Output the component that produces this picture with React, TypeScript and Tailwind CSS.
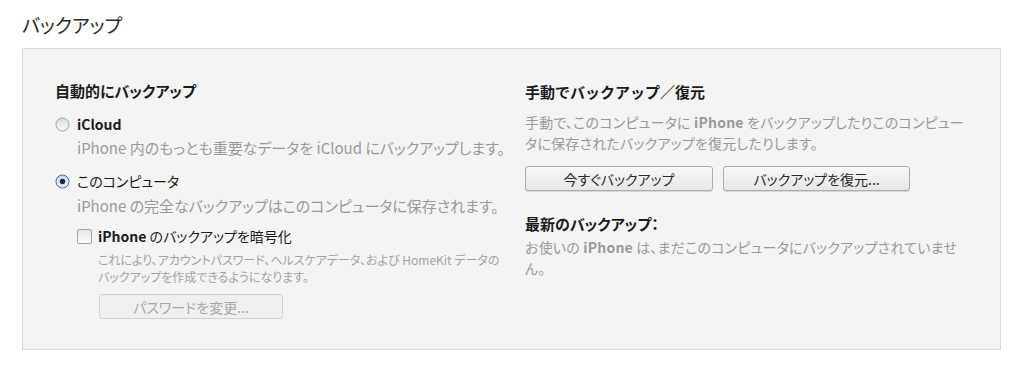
import React from "react";

const FONT = { fontFamily: '"Noto Sans CJK JP", "Noto Sans", sans-serif' };

function Radio({ checked }: { checked: boolean }) {
  return (
    <svg width="15" height="15" viewBox="0 0 15 15" className="shrink-0">
      <defs>
        <linearGradient id={checked ? "rOn" : "rOff"} x1="0" y1="0" x2="0" y2="1">
          <stop offset="0" stopColor={checked ? "#c4d7ee" : "#dcdcdc"} />
          <stop offset="1" stopColor={checked ? "#eef4fb" : "#fafafa"} />
        </linearGradient>
      </defs>
      <circle
        cx="7.5"
        cy="7.5"
        r="6.5"
        fill={`url(#${checked ? "rOn" : "rOff"})`}
        stroke={checked ? "#3f6ea6" : "#a6a6a6"}
        strokeWidth="1"
      />
      {checked && <circle cx="7.5" cy="7.5" r="2.7" fill="#1c2a3c" />}
    </svg>
  );
}

function Checkbox() {
  return (
    <div className="w-[15px] h-[15px] shrink-0 rounded-[2px] border border-[#a5a5a5] bg-gradient-to-b from-[#e6e6e6] to-[#fdfdfd]" />
  );
}

function WinButton({ children, disabled, className }: { children: React.ReactNode; disabled?: boolean; className?: string }) {
  return (
    <button
      disabled={disabled}
      className={
        "h-[25px] rounded-[3px] border text-[14px] leading-none flex items-center justify-center " +
        (disabled
          ? "border-[#d2d2d2] bg-[#f0f0f0] text-[#a8a8a8] "
          : "border-[#adadad] bg-gradient-to-b from-[#f8f8f8] to-[#e6e6e6] text-[#2a2a2a] shadow-[0_1px_0_#d6d6d6] ") +
        (className ?? "")
      }
    >
      {children}
    </button>
  );
}

export default function App() {
  return (
    <div className="w-[1024px] h-[369px] bg-white overflow-hidden [font-feature-settings:'palt']" style={FONT}>
      {/* Title */}
      <h1 className="pl-[22px] pt-[11px] mb-[9px] text-[19px] leading-[28px] text-[#2b2b2b]">
        バックアップ
      </h1>

      {/* Panel */}
      <div className="ml-[22px] w-[979px] h-[302px] border border-[#dadada] bg-[#f4f4f4] flex">
        {/* Automatic backup */}
        <div className="w-[502px] pl-[32px] pt-[32px] flex flex-col whitespace-nowrap">
          <div className="text-[15px] leading-[20px] font-bold text-[#1b1b1b]">自動的にバックアップ</div>

          <label className="mt-[13px] flex items-center gap-[7px] h-[20px] text-[14px] text-[#1b1b1b]">
            <Radio checked={false} />
            <span className="font-bold">iCloud</span>
          </label>
          <div className="mt-[4px] pl-[22px] text-[15px] leading-[20px] text-[#9a9a9a]">
            iPhone 内のもっとも重要なデータを iCloud にバックアップします。
          </div>

          <label className="mt-[13px] flex items-center gap-[7px] h-[20px] text-[14px] text-[#1b1b1b]">
            <Radio checked={true} />
            <span>このコンピュータ</span>
          </label>
          <div className="mt-[5px] pl-[22px] text-[15px] leading-[20px] text-[#9a9a9a]">
            iPhone の完全なバックアップはこのコンピュータに保存されます。
          </div>

          <label className="mt-[10px] ml-[22px] flex items-center gap-[6px] h-[20px] text-[14px] text-[#1b1b1b]">
            <Checkbox />
            <span>
              <span className="font-bold">iPhone</span> のバックアップを暗号化
            </span>
          </label>
          <div className="mt-[5px] pl-[43px] text-[12px] leading-[17px] text-[#a3a3a3]">
            これにより、アカウントパスワード、ヘルスケアデータ、および HomeKit データの
            <br />
            バックアップを作成できるようになります。
          </div>
          <div className="mt-[9px] pl-[44px]">
            <WinButton disabled className="w-[184px]">
              パスワードを変更...
            </WinButton>
          </div>
        </div>

        {/* Manual backup */}
        <div className="flex-1 pt-[33px] flex flex-col whitespace-nowrap">
          <div className="text-[15px] leading-[20px] font-bold text-[#1b1b1b] [font-feature-settings:normal]">
            手動でバックアップ／復元
          </div>
          <div className="mt-[10px] text-[14px] leading-[21px] text-[#9a9a9a] tracking-[0.2px]">
            手動で、このコンピュータに <span className="font-bold">iPhone</span> をバックアップしたりこのコンピュー
            <br />
            タに保存されたバックアップを復元したりします。
          </div>
          <div className="mt-[12px] flex gap-[10px]">
            <WinButton className="w-[188px]">今すぐバックアップ</WinButton>
            <WinButton className="w-[187px]">バックアップを復元...</WinButton>
          </div>
          <div className="mt-[23px] text-[15px] leading-[20px] font-bold text-[#1b1b1b]">最新のバックアップ：</div>
          <div className="mt-[3px] text-[14px] leading-[21px] text-[#9a9a9a] tracking-[0.2px]">
            お使いの <span className="font-bold">iPhone</span> は、まだこのコンピュータにバックアップされていませ
            <br />
            ん。
          </div>
        </div>
      </div>
    </div>
  );
}
